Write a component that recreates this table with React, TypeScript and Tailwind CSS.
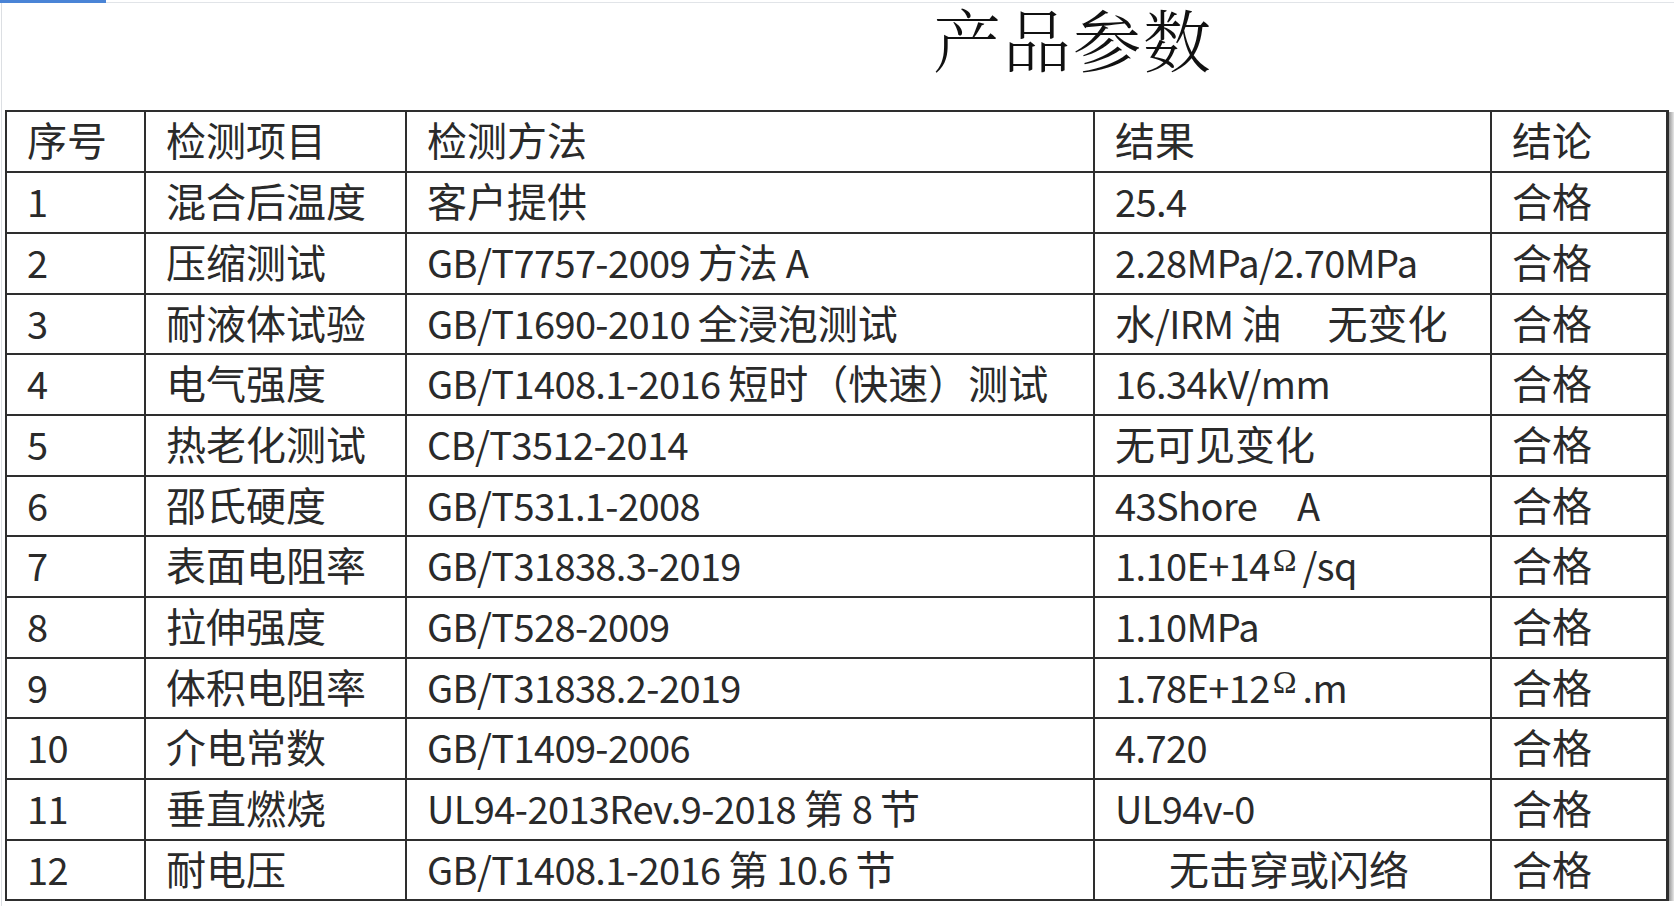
import React from 'react';

type Cell = React.ReactNode;

interface Row {
  no: string;
  item: string;
  method: string;
  result: Cell;
  indent?: boolean;
}

// Latin runs are set a little narrower, like the Calibri of the original sheet
const L = ({ children }: { children: React.ReactNode }) => (
  <span className="text-[38px] tracking-[-0.6px]">{children}</span>
);

function mixed(text: string): Cell {
  const parts = text.split(/([\x20-\x7E]+)/).filter(Boolean);
  return parts.map((p, i) => (/^[\x20-\x7E]+$/.test(p) ? <L key={i}>{p}</L> : <span key={i}>{p}</span>));
}

const Ohm = () => (
  <span className="ml-[3px] mr-[6px] align-[10px] font-['Liberation_Serif',serif] text-[32px] font-light">Ω</span>
);

const rows: Row[] = [
  { no: '1', item: '混合后温度', method: '客户提供', result: '25.4' },
  { no: '2', item: '压缩测试', method: 'GB/T7757-2009 方法 A', result: '2.28MPa/2.70MPa' },
  {
    no: '3',
    item: '耐液体试验',
    method: 'GB/T1690-2010 全浸泡测试',
    result: (
      <>
        水<L>/IRM </L>油<span className="ml-[46px]">无变化</span>
      </>
    ),
  },
  { no: '4', item: '电气强度', method: 'GB/T1408.1-2016 短时（快速）测试', result: '16.34kV/mm' },
  { no: '5', item: '热老化测试', method: 'CB/T3512-2014', result: '无可见变化' },
  {
    no: '6',
    item: '邵氏硬度',
    method: 'GB/T531.1-2008',
    result: (
      <L>
        43Shore<span className="ml-[40px]">A</span>
      </L>
    ),
  },
  {
    no: '7',
    item: '表面电阻率',
    method: 'GB/T31838.3-2019',
    result: (
      <>
        <L>1.10E+14</L>
        <Ohm />
        <L>/sq</L>
      </>
    ),
  },
  { no: '8', item: '拉伸强度', method: 'GB/T528-2009', result: '1.10MPa' },
  {
    no: '9',
    item: '体积电阻率',
    method: 'GB/T31838.2-2019',
    result: (
      <>
        <L>1.78E+12</L>
        <Ohm />
        <L>.m</L>
      </>
    ),
  },
  { no: '10', item: '介电常数', method: 'GB/T1409-2006', result: '4.720' },
  { no: '11', item: '垂直燃烧', method: 'UL94-2013Rev.9-2018 第 8 节', result: 'UL94v-0' },
  { no: '12', item: '耐电压', method: 'GB/T1408.1-2016 第 10.6 节', result: '无击穿或闪络', indent: true },
];

// 12 body rows share 728px: 61, 61, 60 repeating
const rowHeights = ['h-[61px]', 'h-[61px]', 'h-[60px]'];

const cellBase = 'flex items-center border-r-2 border-b-2 border-[#2e2e2e] pb-[5px] whitespace-pre';

function Cells({ values, h, indent }: { values: Cell[]; h: string; indent?: boolean }) {
  return (
    <>
      {values.map((v, i) => (
        <div
          key={i}
          className={`${cellBase} ${h} ${i === 4 ? 'border-r-[3px]' : ''} ${
            indent && i === 3 ? 'pl-[74px]' : 'pl-5'
          }`}
        >
          <span>{typeof v === 'string' ? mixed(v) : v}</span>
        </div>
      ))}
    </>
  );
}

export default function App() {
  return (
    <div className="flex h-[906px] w-[1674px] flex-col overflow-hidden bg-white">
      <div className="flex h-[3px] shrink-0">
        <div className="w-[106px] bg-[#4a84d6]" />
        <div className="flex-1 border-b border-[#e1e4e8]" />
      </div>

      <div className="ml-[1px] flex flex-1 flex-col border-l border-[#dcdfe3] pl-[3px]">
        <div className="h-[107px] shrink-0">
          <h1 className="ml-[928px] w-fit font-['Noto_Serif_CJK_SC','Noto_Sans_CJK_SC',serif] text-[68px] font-light leading-[70px] tracking-[2px] text-[#111]">
            产品参数
          </h1>
        </div>

        <div className="flex">
          <div className="grid grid-cols-[139px_261px_688px_397px_177px] border-l-2 border-t-2 border-[#2e2e2e] font-['Noto_Sans_CJK_SC',sans-serif] text-[40px] leading-none text-[#2a2a2a]">
            <Cells values={['序号', '检测项目', '检测方法', '结果', '结论']} h="h-[61px]" />
            {rows.map((r, i) => (
              <Cells
                key={r.no}
                values={[r.no, r.item, r.method, r.result, '合格']}
                h={rowHeights[i % 3]}
                indent={r.indent}
              />
            ))}
          </div>
          <div className="mt-[2px] w-[5px] bg-gradient-to-r from-[#9a9a9a] to-[#e8e8e8]" />
        </div>
      </div>
    </div>
  );
}
